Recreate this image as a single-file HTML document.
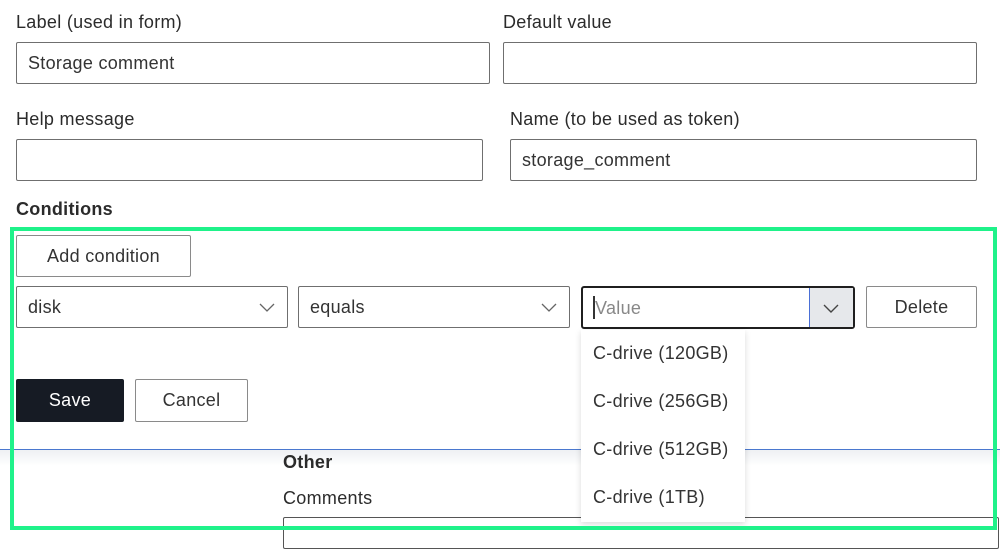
<!DOCTYPE html>
<html><head><style>
body{margin:0;width:1000px;height:535px;background:#fff;font-family:"Liberation Sans",sans-serif;color:#222;position:relative;overflow:hidden;letter-spacing:0.3px}
.a{position:absolute}
.lbl{font-size:18px;color:#2b2b2b}
.in{position:absolute;border:1px solid #6f6f6f;border-radius:2px;box-sizing:border-box;font-size:18px;padding-left:11px;line-height:41px;color:#333}
.btn{position:absolute;border:1px solid #8a8a8a;border-radius:2px;box-sizing:border-box;font-size:18px;text-align:center;line-height:40px;color:#333;background:#fff}
.chev{position:absolute;right:12px;top:12px}
</style></head><body>
<div class="a lbl" style="left:16px;top:12px">Label (used in form)</div>
<div class="a lbl" style="left:503px;top:12px">Default value</div>
<div class="in" style="left:16px;top:42px;width:474px;height:42px">Storage comment</div>
<div class="in" style="left:503px;top:42px;width:474px;height:42px"></div>
<div class="a lbl" style="left:16px;top:109px">Help message</div>
<div class="a lbl" style="left:510px;top:109px">Name (to be used as token)</div>
<div class="in" style="left:16px;top:139px;width:467px;height:42px"></div>
<div class="in" style="left:510px;top:139px;width:467px;height:42px">storage_comment</div>
<div class="a" style="left:16px;top:199px;font-size:18px;font-weight:bold;color:#2b2b2b">Conditions</div>
<div class="btn" style="left:16px;top:235px;width:175px;height:42px">Add condition</div>
<div class="in" style="left:16px;top:286px;width:272px;height:42px">disk<svg class="chev" width="16" height="16" viewBox="0 0 16 16"><path d="M1 5l7 7 7-7" fill="none" stroke="#666" stroke-width="1.3"/></svg></div>
<div class="in" style="left:298px;top:286px;width:272px;height:42px">equals<svg class="chev" width="16" height="16" viewBox="0 0 16 16"><path d="M1 5l7 7 7-7" fill="none" stroke="#666" stroke-width="1.3"/></svg></div>
<div class="a" style="left:581px;top:286px;width:274px;height:43px;border:2px solid #1f1f1f;border-radius:3px;box-sizing:border-box;background:#fff">
 <div class="a" style="left:10px;top:8px;width:2px;height:23px;background:#333"></div>
 <div class="a" style="left:12px;top:0;line-height:40px;font-size:18px;color:#888">Value</div>
 <div class="a" style="right:0;top:0;width:43px;height:39px;background:#e6e8eb;border-left:1px solid #4a6fd6"><svg style="position:absolute;left:13px;top:12px" width="16" height="16" viewBox="0 0 16 16"><path d="M1 5l7 7 7-7" fill="none" stroke="#444" stroke-width="1.4"/></svg></div>
</div>
<div class="btn" style="left:866px;top:286px;width:111px;height:42px">Delete</div>
<div class="btn" style="left:16px;top:379px;width:108px;height:43px;background:#161b24;border-color:#161b24;color:#fff">Save</div>
<div class="btn" style="left:135px;top:379px;width:113px;height:43px">Cancel</div>
<div class="a" style="left:0;top:449px;width:1000px;height:1px;background:#4a78cf"></div>
<div class="a" style="left:0;top:450px;width:1000px;height:16px;background:linear-gradient(#eef0f3,#fff)"></div>
<div class="a" style="left:283px;top:452px;font-size:18px;font-weight:bold;color:#2b2b2b">Other</div>
<div class="a lbl" style="left:283px;top:488px">Comments</div>
<div class="a" style="left:283px;top:517px;width:714px;height:30px;border:1px solid #555;border-radius:2px"></div>
<div class="a" style="left:581px;top:330px;width:164px;height:192px;background:#fff;box-shadow:0 2px 6px rgba(0,0,0,.15);font-size:18px;color:#333">
 <div class="a" style="left:12px;top:13px">C-drive (120GB)</div>
 <div class="a" style="left:12px;top:61px">C-drive (256GB)</div>
 <div class="a" style="left:12px;top:109px">C-drive (512GB)</div>
 <div class="a" style="left:12px;top:157px">C-drive (1TB)</div>
</div>
<div class="a" style="left:10px;top:227px;width:987px;height:303px;border:4px solid #1ff28a;box-sizing:border-box"></div>
</body></html>
